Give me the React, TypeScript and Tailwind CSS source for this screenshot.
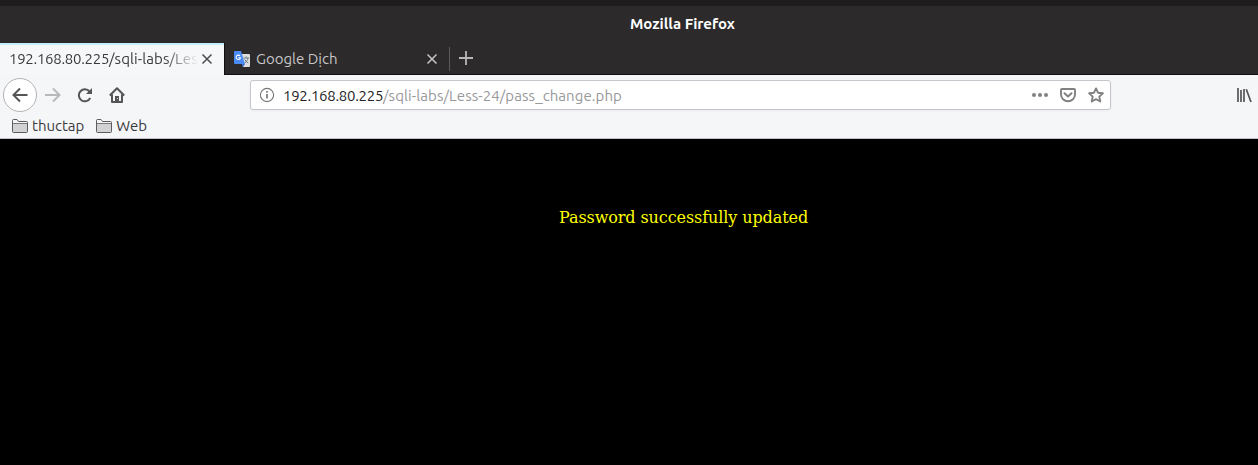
import type { ReactNode } from 'react';

function Icon({ size = 16, className = '', children }: { size?: number; className?: string; children: ReactNode }) {
  return (
    <svg width={size} height={size} viewBox="0 0 16 16" fill="none" stroke="currentColor" className={`shrink-0 ${className}`}>
      {children}
    </svg>
  );
}

function CloseIcon({ className }: { className: string }) {
  return (
    <Icon className={className}>
      <path d="M3.500 3.500l9 9M12.500 3.500l-9 9" strokeWidth="1.500" />
    </Icon>
  );
}

function TranslateIcon() {
  return (
    <svg width="16" height="16" viewBox="0 0 16 16" className="shrink-0">
      <path d="M6 3h9a1 1 0 0 1 1 1v11a1 1 0 0 1-1 1H9z" fill="#dedede" />
      <path d="M8 13h3l-2 3z" fill="#3367d6" />
      <path d="M1 0h6l4 13H1a1 1 0 0 1-1-1V1a1 1 0 0 1 1-1z" fill="#4a8af4" />
      <path d="M6 4.900A2.200 2.200 0 1 0 6.500 6.700H4.500" fill="none" stroke="#fff" strokeWidth="1.1" />
      <path d="M9.500 7h5.500M12.200 5.500V7M14 7c-.3 2-1.600 3.800-3.200 5M10.800 8.500c.7 1.500 1.900 2.700 3.400 3.500" fill="none" stroke="#6b7f86" strokeWidth="1" />
    </svg>
  );
}

function Bookmark({ label }: { label: string }) {
  return (
    <div className="flex items-center gap-1">
      <svg width="16" height="14" viewBox="0 0 16 14" className="shrink-0">
        <path d="M.5 12.500V1.500a1 1 0 0 1 1-1H5L6.500 2.500h8a1 1 0 0 1 1 1v9a1 1 0 0 1-1 1h-13a1 1 0 0 1-1-1z" fill="#d2d2d3" stroke="#5c5c5e" />
        <path d="M1 4V1.500a.5.500 0 0 1 .5-.5H4.700L6 3h9v1z" fill="#f5f6f7" />
        <path d="M1 4.500H15" fill="none" stroke="#77777a" />
      </svg>
      <span className="whitespace-nowrap">{label}</span>
    </div>
  );
}

export default function App() {
  return (
    <div className="flex h-[465px] w-[1258px] flex-col overflow-hidden bg-black font-['Ubuntu','Noto_Sans',sans-serif] text-[15px] leading-5 text-[#3a3a3c]">
      <header className="h-[43px] border-t-[6px] border-[#1e1c1d] bg-[#2c2a2b] pt-2 pl-[107px] text-center font-bold text-white">
        Mozilla Firefox
      </header>
      <div className="flex h-8 bg-[#2c2a2b]">
        <div className="flex w-[224px] flex-col bg-[#f6f7f9]">
          <div className="h-0.5 shrink-0 bg-[#c4eefa]" />
          <div className="flex h-7 items-center pl-[9px]">
            <span className="w-[188px] whitespace-nowrap [mask-image:linear-gradient(to_right,black_155px,transparent_189px)]">
              <span className="tracking-[-0.29px]">192.168.80.225</span>
              <span className="tracking-[0.08px]">/sqli-labs/Les</span>
            </span>
            <CloseIcon className="ml-0.5 text-[#4d4d4f]" />
          </div>
        </div>
        <div className="flex flex-1 items-center border-b border-l border-[#101010] pl-[9px] text-[#c7c6c6]">
          <TranslateIcon />
          <span className="ml-1.5 w-[168px]">Google Dịch</span>
          <CloseIcon className="text-[#c7c6c6]" />
          <div className="ml-[9px] h-6 w-px bg-[#5b595a]" />
          <Icon className="ml-2 -mt-px text-[#b9b8b8]">
            <path d="M8 1v14M1 8h14" strokeWidth="1.800" />
          </Icon>
        </div>
      </div>
      <div className="flex h-16 flex-col border-b border-[#bfc1c5] bg-[#f5f6f8]">
        <div className="flex h-10 items-center pl-[3px] text-[#555557]">
          <div className="flex size-[34px] items-center justify-center rounded-full border border-[#b2b2b4] bg-white">
            <Icon>
              <path d="M15.500 8H1.500M8 1.500L1.500 8L8 14.500" strokeWidth="2" />
            </Icon>
          </div>
          <Icon className="ml-2 text-[#b8b8bb]">
            <path d="M0 8h14.500M8 1.500L14.500 8L8 14.500" strokeWidth="2" />
          </Icon>
          <Icon className="ml-4">
            <path d="M13.200 11A6 6 0 1 1 12.500 4.500" strokeWidth="2" />
            <path d="M15 1v6H9z" fill="currentColor" stroke="none" />
          </Icon>
          <Icon className="ml-4">
            <path d="M.8 8.500L8 1.300L15.200 8.500M3 7.500V15h10V7.500" strokeWidth="2" strokeLinejoin="round" />
            <path d="M6 9h4v6H6z" fill="currentColor" stroke="none" />
            <path d="M8.500 11v1" stroke="#d8d8da" strokeWidth="1" />
          </Icon>
          <div className="ml-[125px] flex h-[30px] w-[861px] items-center rounded-[3px] border border-[#c4c6cb] bg-white pl-2 shadow-[0_1px_3px_rgba(0,0,0,0.05)]">
            <Icon className="text-[#77777a]">
              <circle cx="8" cy="8" r="6.600" strokeWidth="1.100" />
              <path d="M8 7v4.500M8 4v1.700" strokeWidth="1.700" />
            </Icon>
            <span className="mt-px ml-2 flex-1 whitespace-nowrap text-[#98989a]">
              <span className="tracking-[-0.29px] text-[#242426]">192.168.80.225</span>
              <span className="tracking-[0.08px]">/sqli-labs/Less-24/pass_change.php</span>
            </span>
            <div className="flex gap-3 pr-1.5 text-[#818183]">
              <Icon>
                <g fill="currentColor" stroke="none">
                  <circle cx="2" cy="8" r="2" />
                  <circle cx="8" cy="8" r="2" />
                  <circle cx="14" cy="8" r="2" />
                </g>
              </Icon>
              <Icon>
                <path d="M1.900 2h12.200q.9 0 .9.900V7.500a7 6.700 0 0 1-14 0V2.900Q1 2 1.900 2z" strokeWidth="1.900" />
                <path d="M4.500 6.200L8 9.500L11.500 6.200" strokeWidth="2" strokeLinecap="round" strokeLinejoin="round" />
              </Icon>
              <Icon>
                <path d="M8 1.400L10 5.700L14.900 6.300L11.300 9.600L12.300 14.500L8 12.100L3.700 14.500L4.700 9.600L1.100 6.300L6 5.700z" strokeWidth="1.900" strokeLinejoin="round" />
              </Icon>
            </div>
          </div>
          <Icon className="ml-[125px]">
            <path d="M2 1v14M5 3v12M8 2v13M10.300 2.300L15 15" strokeWidth="1.700" />
          </Icon>
        </div>
        <nav className="flex h-[22px] items-center gap-3 pl-3">
          <Bookmark label="thuctap" />
          <Bookmark label="Web" />
        </nav>
      </div>
      <main className="pt-[69px] pl-[559px] font-['DejaVu_Serif',serif] text-base leading-5 tracking-[-0.09px] text-[#ffff00]">
        Password successfully updated
      </main>
    </div>
  );
}
